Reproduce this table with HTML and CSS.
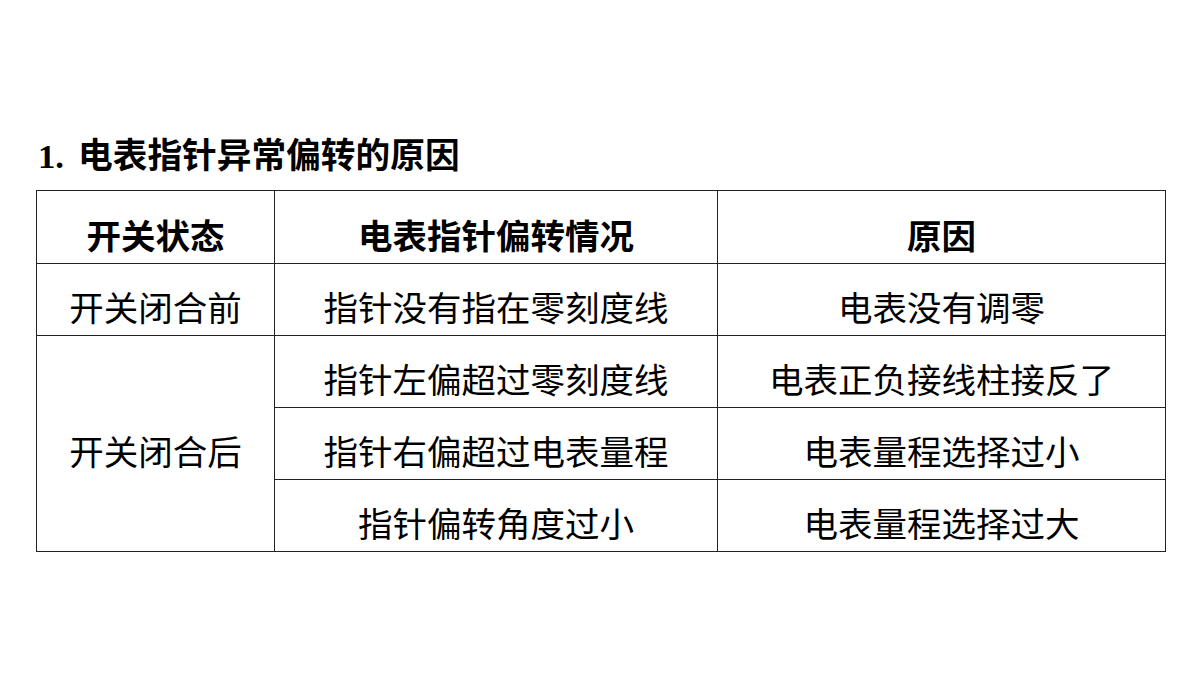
FILE: index.html
```html
<!DOCTYPE html>
<html lang="zh-CN">
<head>
<meta charset="utf-8">
<link rel="stylesheet" href="styles.css">
</head>
<body>
<div class="page">
  <h1 class="title"><span class="num">1.</span>电表指针异常偏转的原因</h1>
  <table class="grid">
    <colgroup>
      <col class="c1"><col class="c2"><col class="c3">
    </colgroup>
    <tr class="head">
      <th>开关状态</th>
      <th>电表指针偏转情况</th>
      <th>原因</th>
    </tr>
    <tr>
      <td>开关闭合前</td>
      <td>指针没有指在零刻度线</td>
      <td>电表没有调零</td>
    </tr>
    <tr>
      <td rowspan="3">开关闭合后</td>
      <td>指针左偏超过零刻度线</td>
      <td>电表正负接线柱接反了</td>
    </tr>
    <tr>
      <td>指针右偏超过电表量程</td>
      <td>电表量程选择过小</td>
    </tr>
    <tr>
      <td>指针偏转角度过小</td>
      <td>电表量程选择过大</td>
    </tr>
  </table>
</div>
</body>
</html>
```

FILE: styles.css
```css
html, body {
  margin: 0;
  padding: 0;
  background: #ffffff;
}
body {
  width: 1200px;
  height: 675px;
  overflow: hidden;
  font-family: "Noto Sans CJK SC", "Liberation Sans", sans-serif;
  color: #000;
}
.page {
  padding-top: 131px;
  padding-left: 36px;
}
.title {
  margin: 0 0 0 2px;
  font-size: 34.7px;
  line-height: 44px;
  font-weight: bold;
  height: 59px;
}
.num {
  font-family: "Liberation Serif", serif;
  font-weight: bold;
  margin-right: 14px;
}
.grid {
  border-collapse: collapse;
  table-layout: fixed;
  width: 1129px;
}
.c1 { width: 238px; }
.c2 { width: 443px; }
.c3 { width: 448px; }
.grid th, .grid td {
  border: 1px solid #222;
  text-align: center;
  vertical-align: middle;
  font-size: 34.5px;
  line-height: 40px;
  padding: 13px 0 0 0;
  height: 58px;
}
.grid th {
  font-weight: bold;
}
.grid tr.head th {
  height: 59px;
}
```
